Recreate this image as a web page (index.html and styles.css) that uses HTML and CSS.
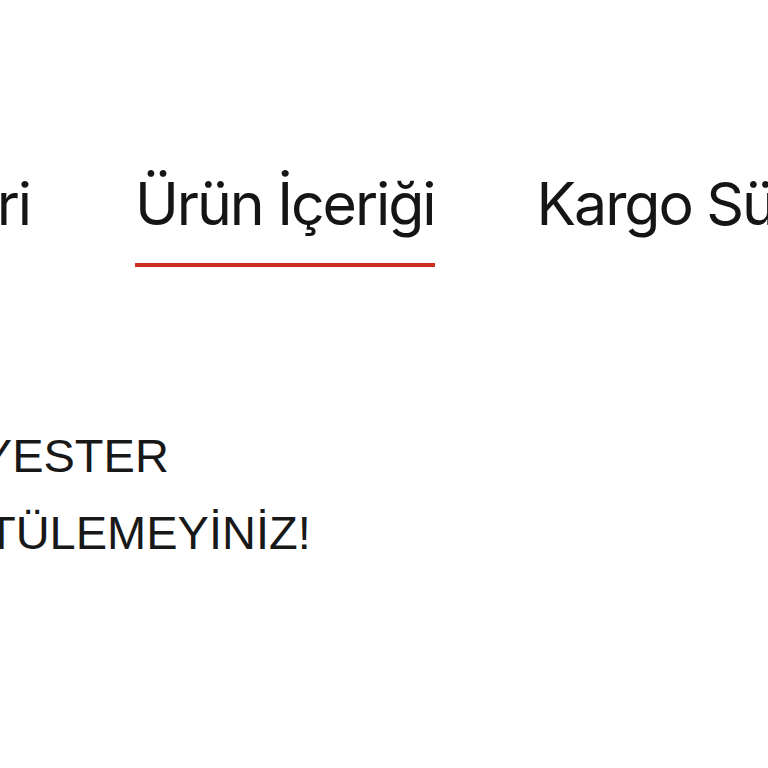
FILE: index.html
```html
<!DOCTYPE html>
<html lang="tr">
<head>
<meta charset="utf-8">
<link rel="stylesheet" href="styles.css">
</head>
<body>
<div class="page">
  <nav class="tabs">
    <div class="tab tab-first">Ürün Bilgileri</div>
    <div class="tab tab-active">Ürün İçeriği</div>
    <div class="tab tab-last">Kargo Süreci</div>
  </nav>
  <section class="content">
    <div class="line line-1">%100 POLYESTER</div>
    <div class="line line-2">ÜTÜLEMEYİNİZ!</div>
  </section>
</div>
</body>
</html>
```
FILE: styles.css
```css
html, body {
  margin: 0;
  padding: 0;
  background: #ffffff;
  overflow: hidden;
}
.page {
  width: 768px;
  height: 768px;
  overflow: hidden;
}
.tabs {
  display: flex;
  align-items: flex-start;
  gap: 105px;
  padding-top: 168px;
  font-family: Inter, "Noto Sans", sans-serif;
  font-size: 59px;
  line-height: 72px;
  letter-spacing: -0.035em;
  color: #151515;
  white-space: nowrap;
}
.tab {
  flex: none;
  padding-bottom: 23px;
  border-bottom: 4px solid transparent;
}
.tab-first {
  width: 400px;
  margin-left: -370px;
  text-align: right;
  overflow: hidden;
}
.tab-active {
  border-bottom-color: #cc2f1c;
}
.tab-last {
  margin-left: -3px;
}
.content {
  margin-top: 150px;
  font-family: "Liberation Sans", Arial, sans-serif;
  font-size: 47px;
  line-height: 77px;
  color: #181818;
  white-space: nowrap;
}
.line-1 {
  margin-left: -243px;
}
.line-2 {
  margin-left: -47px;
}
```
